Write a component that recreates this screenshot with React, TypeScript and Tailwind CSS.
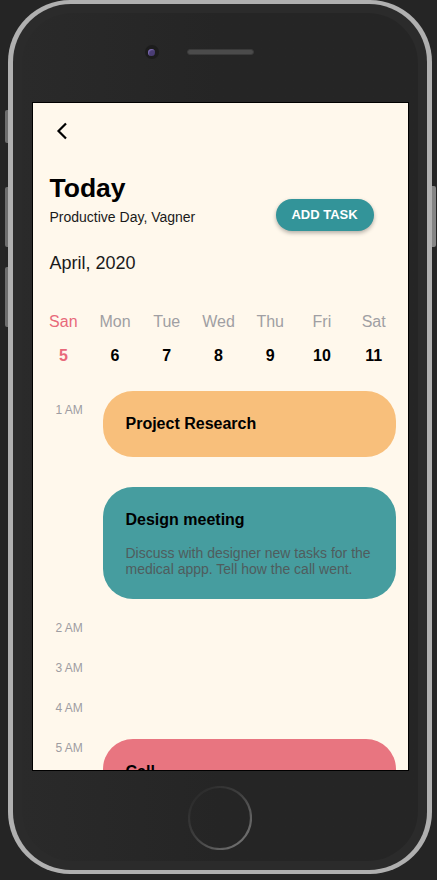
import React from "react";

const days = [
  { d: "San", n: "5", active: true },
  { d: "Mon", n: "6" },
  { d: "Tue", n: "7" },
  { d: "Wed", n: "8" },
  { d: "Thu", n: "9" },
  { d: "Fri", n: "10" },
  { d: "Sat", n: "11" },
];

function Label({ text, className = "" }: { text: string; className?: string }) {
  return (
    <div className={"w-[70px] shrink-0 pl-[23px] text-[12px] leading-[14px] text-[#9e9da2] " + className}>
      {text}
    </div>
  );
}

export default function App() {
  return (
    <div className="w-[437px] h-[880px] bg-[#252525] font-['Liberation_Sans',Arial,sans-serif] overflow-hidden">
      <div className="relative ml-[8px] w-[424px] h-[874px]">
        {/* side buttons */}
        <div className="absolute left-[-3px] top-[110px] w-[3px] h-[33px] rounded-l-[2px] bg-[#6e6e6e]" />
        <div className="absolute left-[-3px] top-[187px] w-[3px] h-[60px] rounded-l-[2px] bg-[#6e6e6e]" />
        <div className="absolute left-[-3px] top-[267px] w-[3px] h-[60px] rounded-l-[2px] bg-[#6e6e6e]" />
        <div className="absolute right-[-4px] top-[186px] w-[4px] h-[61px] rounded-r-[2px] bg-[#858585]" />

        <div className="w-full h-full rounded-[62px] bg-[#b0b0b0] py-[4px] px-[5px]">
          <div className="w-full h-full rounded-[58px] bg-[#2b2b2b] p-[9px]">
            <div className="w-full h-full rounded-[50px] bg-gradient-to-r from-[#2a2a2a] via-[#252525] to-[#252525] flex flex-col items-center">
              {/* top: camera + speaker */}
              <div className="h-[90px] w-full flex justify-center pt-[32px]">
                <div className="flex items-center gap-[28px] h-[14px]">
                  <div className="w-[14px] h-[14px] rounded-full bg-[#1c1c1c] flex items-center justify-center">
                    <div className="w-[7px] h-[7px] rounded-full bg-[#4a3d74] shadow-[inset_1px_1px_1px_rgba(160,140,220,0.6)]" />
                  </div>
                  <div className="w-[67px] h-[6px] rounded-full bg-[#4b4b4b] border border-[#3a3a3a]" />
                  <div className="w-[14px] h-[14px]" />
                </div>
              </div>

              {/* screen */}
              <div className="w-[375px] h-[667px] shrink-0 bg-[#fff8ec] ring-1 ring-black overflow-hidden flex flex-col">
                <div className="pl-[23px] pt-[19px] h-[37px]">
                  <svg width="12" height="18" viewBox="0 0 12 18">
                    <path d="M10 1.5 L2.5 9 L10 16.5" fill="none" stroke="#000" strokeWidth="2.2" />
                  </svg>
                </div>

                <div className="mt-[33px] flex items-start justify-between pl-[17px] pr-[34px]">
                  <div>
                    <div className="text-[26.5px] leading-[30px] font-bold text-black">Today</div>
                    <div className="mt-[6px] text-[14px] leading-[16px] text-[#1a1a1a]">Productive Day, Vagner</div>
                  </div>
                  <div className="mt-[26px] w-[98px] h-[32px] rounded-full bg-[#339499] shadow-[0_2px_4px_rgba(0,0,0,0.3)] flex items-center justify-center text-white text-[13px] font-bold">
                    ADD TASK
                  </div>
                </div>

                <div className="mt-[21px] pl-[17px] text-[18px] leading-[22px] text-[#1a1a1a]">April, 2020</div>

                <div className="mt-[38px] ml-[5px] w-[362px] grid grid-cols-7">
                  {days.map((x) => (
                    <div key={x.d} className={"text-center text-[16px] leading-[20px] " + (x.active ? "text-[#e8697a]" : "text-[#a09fa3]")}>
                      {x.d}
                    </div>
                  ))}
                </div>
                <div className="mt-[14px] ml-[5px] w-[362px] grid grid-cols-7">
                  {days.map((x) => (
                    <div key={x.n} className={"text-center text-[16px] leading-[20px] font-bold " + (x.active ? "text-[#e8697a]" : "text-black")}>
                      {x.n}
                    </div>
                  ))}
                </div>

                {/* timeline */}
                <div className="mt-[25px] flex flex-col">
                  <div className="flex">
                    <Label text="1 AM" className="mt-[12px]" />
                    <div className="flex-1 mr-[12px] flex flex-col gap-[30px]">
                      <div className="h-[66px] rounded-[30px] bg-[#f8bf7b] flex items-center pl-[23px]">
                        <div className="text-[16px] leading-[20px] font-bold text-black">Project Research</div>
                      </div>
                      <div className="rounded-[30px] bg-[#469d9f] pl-[23px] pr-[20px] pt-[23px] pb-[22px]">
                        <div className="text-[16px] leading-[20px] font-bold text-black">Design meeting</div>
                        <div className="mt-[15px] text-[14px] leading-[16px] text-[#4f5c5d]">
                          Discuss with designer new tasks for the medical appp. Tell how the call went.
                        </div>
                      </div>
                    </div>
                  </div>
                  <div className="flex mt-[22px] h-[40px]">
                    <Label text="2 AM" />
                  </div>
                  <div className="flex h-[40px]">
                    <Label text="3 AM" />
                  </div>
                  <div className="flex h-[38px]">
                    <Label text="4 AM" />
                  </div>
                  <div className="flex">
                    <Label text="5 AM" className="mt-[2px]" />
                    <div className="flex-1 mr-[12px]">
                      <div className="h-[90px] rounded-[30px] bg-[#e87580] pl-[23px] pt-[23px]">
                        <div className="text-[16px] leading-[20px] font-bold text-black">Call</div>
                      </div>
                    </div>
                  </div>
                </div>
              </div>

              {/* home button */}
              <div className="mt-[16px] w-[64px] h-[64px]">
                <svg width="64" height="64" viewBox="0 0 64 64">
                  <defs>
                    <linearGradient id="hb" x1="0" y1="0" x2="1" y2="1">
                      <stop offset="0" stopColor="#252525" />
                      <stop offset="0.45" stopColor="#3e3e3e" />
                      <stop offset="1" stopColor="#7c7c7c" />
                    </linearGradient>
                  </defs>
                  <circle cx="32" cy="32" r="31" fill="none" stroke="url(#hb)" strokeWidth="2.2" />
                </svg>
              </div>
            </div>
          </div>
        </div>
      </div>
    </div>
  );
}
